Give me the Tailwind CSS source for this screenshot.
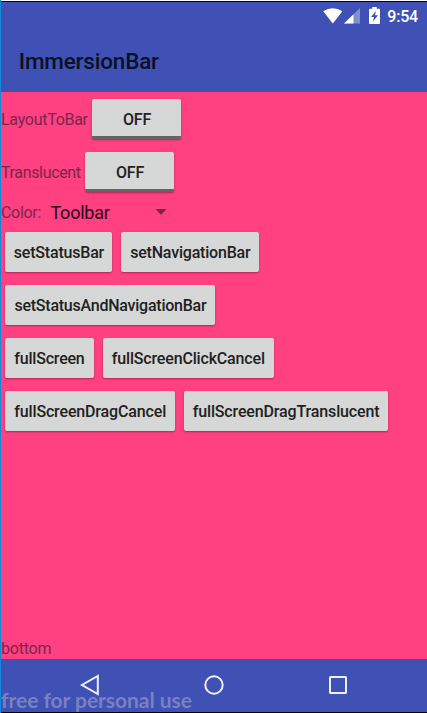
<!DOCTYPE html>
<html lang="en">
<head>
<meta charset="utf-8">
<title>ImmersionBar</title>
<script src="https://cdn.jsdelivr.net/npm/@tailwindcss/browser@4"></script>
</head>
<body class="w-[427px] h-[713px] overflow-hidden bg-white font-['Roboto',sans-serif] text-[16px] tracking-[-0.2px]">
<div class="relative flex flex-col w-[427px] h-[713px] border-l border-[#1488d8]">
  <div class="h-px bg-white shrink-0"></div>
  <div class="h-px bg-black shrink-0"></div>
  <header class="h-[90px] bg-[#3f51b5] shrink-0">
    <div class="h-[28px] flex items-center justify-end pr-[9px] text-white">
      <svg class="w-[20px] h-[16px]" viewBox="0 0 20 16" fill="#fff"><path d="M.2 3.2Q9.8-2.600 19.4 3.200L9.800 15.600Z"/></svg>
      <svg class="w-[16px] h-[16px] ml-[1px]" viewBox="0 0 16 16" fill="#fff"><path opacity=".35" d="M0 15.500L16 0V15.500Z"/><path d="M0 15.500L9.500 6.300V15.500Z"/></svg>
      <svg class="w-[11px] h-[17px] ml-[9px] -mt-px" viewBox="0 0 11 17"><path fill="#fff" d="M3.300 0H7.700V1.700H10Q11 1.700 11 2.700V16Q11 17 10 17H1Q0 17 0 16V2.700Q0 1.700 1 1.700H3.300Z"/><path fill="#3f51b5" d="M7 4L2 10H5L4 14.500L9 8.300H6Z"/></svg>
      <span class="ml-[7px] pt-px leading-[18px] font-medium">9:54</span>
    </div>
    <h1 class="h-[62px] pl-[17.800px] pt-[2px] flex items-center text-[22.5px] font-medium text-[#0b1024]">ImmersionBar</h1>
  </header>
  <main class="h-[567px] shrink-0 bg-[#ff4081] flex flex-col text-[#7b2649]">
    <div class="h-[53px] flex items-center">
      <span class="w-[87px] pt-[2px] tracking-[-0.280px]">LayoutToBar</span>
      <button class="ml-[4px] w-[89px] h-[40px] rounded-[2px] bg-[#d6d7d7] border-b-[3px] border-[#656565] pt-[5px] pl-px shadow-[0_1px_2px_rgba(0,0,0,0.35)] font-medium text-[#212121]">OFF</button>
    </div>
    <div class="h-[54px] flex items-center">
      <span class="w-[80px] pt-[2px] tracking-[-0.350px]">Translucent</span>
      <button class="ml-[4px] w-[89px] h-[40px] rounded-[2px] bg-[#d6d7d7] border-b-[3px] border-[#656565] pt-[4px] pl-px shadow-[0_1px_2px_rgba(0,0,0,0.35)] font-medium text-[#212121]">OFF</button>
    </div>
    <div class="h-[26px] flex items-center">
      <span class="w-[49.500px] pt-[1px] tracking-[-0.300px]">Color:</span>
      <span class="w-[104px] text-[18px] tracking-[-0.25px] text-[#2b0b16]">Toolbar</span>
      <svg class="w-[12px] h-[6px] -mt-[1px]" viewBox="0 0 12 6"><path fill="#7b2649" d="M.5 0H11.500L6 6Z"/></svg>
    </div>
    <div class="h-[53.33px] flex items-center pl-[4.440px] gap-[8.890px] font-medium text-[#212121]">
      <button class="h-[40px] w-[107px] pt-[2px] rounded-[2px] bg-[#d6d7d7] shadow-[0_1px_2px_rgba(0,0,0,0.35)]">setStatusBar</button>
      <button class="h-[40px] w-[138px] pt-[2px] rounded-[2px] bg-[#d6d7d7] shadow-[0_1px_2px_rgba(0,0,0,0.35)]">setNavigationBar</button>
    </div>
    <div class="h-[53px] flex items-center pl-[4.440px] gap-[8.890px] font-medium text-[#212121]">
      <button class="h-[40px] w-[210px] pt-[2px] rounded-[2px] bg-[#d6d7d7] shadow-[0_1px_2px_rgba(0,0,0,0.35)] tracking-[-0.24px]">setStatusAndNavigationBar</button>
    </div>
    <div class="h-[53px] flex items-center pl-[4.440px] gap-[8.890px] font-medium text-[#212121]">
      <button class="h-[40px] w-[89px] pt-[2px] pr-px rounded-[2px] bg-[#d6d7d7] shadow-[0_1px_2px_rgba(0,0,0,0.35)]">fullScreen</button>
      <button class="h-[40px] w-[171px] pt-[2px] pr-px rounded-[2px] bg-[#d6d7d7] shadow-[0_1px_2px_rgba(0,0,0,0.35)] tracking-[-0.17px]">fullScreenClickCancel</button>
    </div>
    <div class="h-[53.33px] flex items-center pl-[4.440px] gap-[8.890px] font-medium text-[#212121]">
      <button class="h-[40px] w-[169.500px] pt-[2px] rounded-[2px] bg-[#d6d7d7] shadow-[0_1px_2px_rgba(0,0,0,0.35)] tracking-[-0.15px]">fullScreenDragCancel</button>
      <button class="h-[40px] w-[204.500px] pt-[2px] rounded-[2px] bg-[#d6d7d7] shadow-[0_1px_2px_rgba(0,0,0,0.35)] tracking-[-0.14px]">fullScreenDragTranslucent</button>
    </div>
    <span class="mt-auto leading-[20px]">bottom</span>
  </main>
  <nav class="h-[53px] shrink-0 bg-[#3f51b5] flex items-center pl-[79px]">
    <svg class="w-[20px] h-[22px] -mt-px" viewBox="0 0 20 22" fill="none" stroke="#eef0fa" stroke-width="2"><path d="M17.800 2V20L2 11Z"/></svg>
    <svg class="w-[20px] h-[20px] ml-[104px] -mt-px" viewBox="0 0 20 20" fill="none" stroke="#eef0fa" stroke-width="2"><circle cx="10" cy="10" r="8.700"/></svg>
    <svg class="w-[18px] h-[18px] ml-[105px] -mt-px" viewBox="0 0 18 18" fill="none" stroke="#eef0fa" stroke-width="2"><rect x="1" y="1" width="16" height="16" rx=".5"/></svg>
  </nav>
  <div class="h-px bg-black shrink-0"></div>
  <span class="absolute left-0 top-[687px] leading-[26px] whitespace-nowrap font-['Lato',sans-serif] font-bold text-[21px] tracking-[-0.04px] text-[#9fa4c8]/60">free for personal use</span>
</div>
</body>
</html>
